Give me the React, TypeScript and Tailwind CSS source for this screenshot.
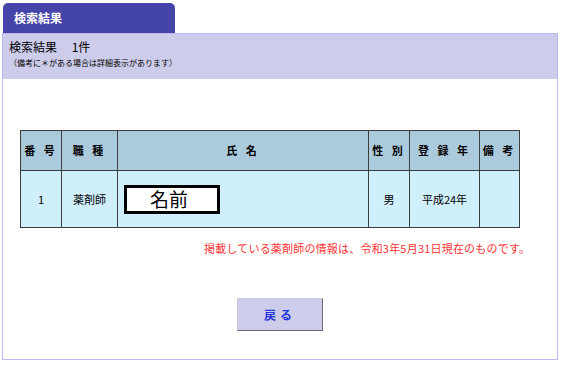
const font = "font-['Noto_Sans_CJK_JP','Noto_Sans',sans-serif]";

const heads = [
  { label: "番 号", w: "w-[41px]" },
  { label: "職 種", w: "w-[56px]" },
  { label: "氏 名", w: "w-[251px]" },
  { label: "性 別", w: "w-[41px]" },
  { label: "登 録 年", w: "w-[70px]" },
  { label: "備 考", w: "w-[40px]" },
];

export default function App() {
  return (
    <div className={`h-[369px] w-[567px] overflow-hidden bg-white text-black ${font}`}>
      <div className="pl-[3px] pt-[3px]">
        <div className="flex h-[30px] w-[172px] items-center rounded-t-[5px] bg-[#4444a9] pl-[11px] text-[12px] font-bold text-white">
          検索結果
        </div>
      </div>

      <div className="ml-[2px] h-[327px] w-[556px] border border-[#babaf0]">
        <div className="h-[45px] bg-[#cdcdeb] pl-[6px] pt-[5px]">
          <p className="text-[12px] leading-[16px]">検索結果　 1件</p>
          <p className="mt-[2px] text-[8px] leading-[12px]">（備考に＊がある場合は詳細表示があります）</p>
        </div>

        <table className="ml-[17px] mt-[51px] w-[500px] table-fixed border-collapse border border-[#6b6b6b] text-[11px]">
          <thead>
            <tr className="h-[40px] bg-[#abcbdd]">
              {heads.map((h) => (
                <th key={h.label} className={`${h.w} border border-[#3c3c3c] text-center font-bold tracking-[3px]`}>
                  {h.label}
                </th>
              ))}
            </tr>
          </thead>
          <tbody>
            <tr className="h-[57px] bg-[#d0effd]">
              <td className="border border-[#3c3c3c] text-center">1</td>
              <td className="border border-[#3c3c3c] text-center">薬剤師</td>
              <td className="border border-[#3c3c3c] pl-[6px]">
                <div className="flex h-[29px] w-[96px] items-center justify-center border-[3px] border-black bg-white pr-[6px] text-[19px]">
                  名前
                </div>
              </td>
              <td className="border border-[#3c3c3c] text-center">男</td>
              <td className="border border-[#3c3c3c] text-center">平成24年</td>
              <td className="border border-[#3c3c3c]"></td>
            </tr>
          </tbody>
        </table>

        <p className="ml-[201px] mt-[12px] text-[11px] leading-[16px] tracking-[0.2px] text-[#ff3333]">
          掲載している薬剤師の情報は、令和3年5月31日現在のものです。
        </p>

        <div className="ml-[234px] mt-[42px]">
          <button className="h-[33px] w-[86px] border border-[#c8c8d8] border-b-[#6d6d6d] border-r-[#6d6d6d] bg-[#cdcdeb] text-[12px] font-bold tracking-[4px] text-[#2233dd]">
            戻る
          </button>
        </div>
      </div>
    </div>
  );
}
